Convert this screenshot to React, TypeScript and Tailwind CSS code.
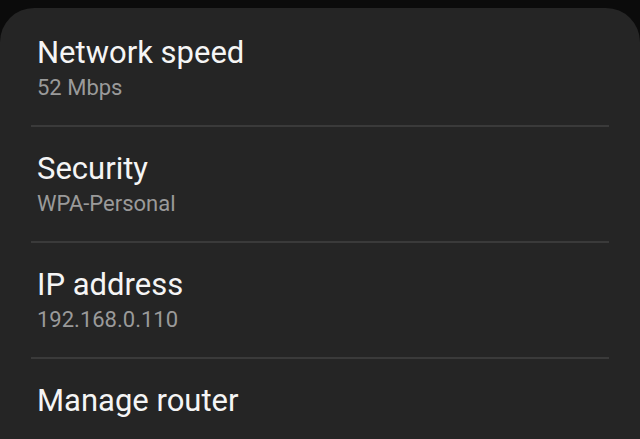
import React from "react";

const items = [
  { title: "Network speed", sub: "52 Mbps" },
  { title: "Security", sub: "WPA-Personal" },
  { title: "IP address", sub: "192.168.0.110" },
];

export default function App() {
  return (
    <div className="w-[640px] h-[439px] overflow-hidden bg-[#0b0b0b] pt-[8px]" style={{ fontFamily: "Roboto, 'Noto Sans', sans-serif" }}>
      <div className="bg-[#252525] rounded-t-[34px] h-[460px] pt-[3px] flex flex-col">
        {items.map((it) => (
          <div key={it.title} className="flex flex-col">
            <div className="pl-[37px] pt-[24px] h-[116px] flex flex-col">
              <div className="text-[31px] leading-[36px] text-[#f5f5f5]">{it.title}</div>
              <div className="text-[22px] leading-[26px] text-[#9a9a9a] mt-[4px]">{it.sub}</div>
            </div>
            <div className="mx-[31px] h-[2px] -mt-[2px] bg-[#3a3a3a]" />
          </div>
        ))}
        <div className="pl-[37px] pt-[24px]">
          <div className="text-[31px] leading-[36px] text-[#f5f5f5]">Manage router</div>
        </div>
      </div>
    </div>
  );
}
